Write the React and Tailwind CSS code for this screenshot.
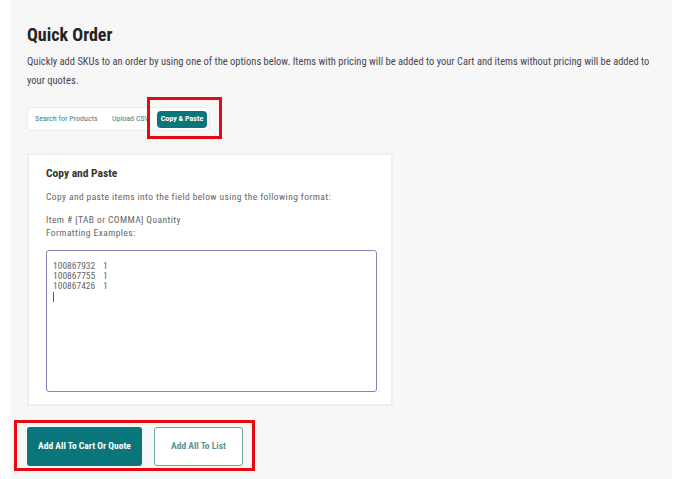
export default function App() {
  const font = "font-['Roboto_Condensed','Liberation_Sans_Narrow','Arial_Narrow','Liberation_Sans',sans-serif]";
  const rows = ["100867932", "100867755", "100867426"];
  return (
    <div className={`w-[688px] h-[479px] bg-white flex overflow-hidden ${font}`}>
      <div className="ml-[10px] w-[662px] h-full bg-[#f7f7f7] pl-[17px] pr-[14px] flex flex-col">
        <h1 className="mt-[23px] text-[18px] leading-[24px] font-bold text-[#222]">Quick Order</h1>
        <p className="mt-[5px] text-[10.5px] leading-[19px] text-[#4a4550]">
          Quickly add SKUs to an order by using one of the options below. Items with pricing will be added to your Cart and items without pricing will be added to your quotes.
        </p>

        <div className="relative mt-[17px] self-start">
          <div className="w-[183px] h-[24px] bg-white border border-[#ececec] rounded-[4px] flex items-center pl-[7px] text-[8px] text-[#3f7f87] whitespace-nowrap">
            <span className="w-[77px]">Search for Products</span>
            <span className="w-[44px] overflow-hidden">Upload CSV</span>
            <span className="ml-[1px] w-[50px] h-[17px] rounded-[4px] bg-[#0a767c] text-white font-bold flex items-center justify-center">Copy &amp; Paste</span>
          </div>
          <div className="absolute left-[120px] top-[-10px] w-[75px] h-[42px] border-[3px] border-[#e8080f]" />
        </div>

        <div className="mt-[22px] w-[366px] h-[253px] bg-white border-2 border-[#efefef] pl-[17px] pt-[10px]">
          <div className="text-[11.5px] font-bold text-[#333] leading-[16px]">Copy and Paste</div>
          <div className="mt-[9px] text-[9.5px] tracking-[0.4px] text-[#666] leading-[13px]">
            <div>Copy and paste items into the field below using the following format:</div>
            <div className="mt-[10px]">Item # [TAB or COMMA] Quantity</div>
            <div>Formatting Examples:</div>
          </div>
          <div className="mt-[11px] w-[331px] h-[142px] border-[1.5px] border-[#8585b5] rounded-[3px] pl-[6px] pt-[10px] text-[9.5px] leading-[10px] text-[#666]">
            {rows.map((r) => (
              <div key={r} className="flex">
                <span className="w-[50px]">{r}</span>
                <span>1</span>
              </div>
            ))}
            <div className="mt-[1px] w-[1px] h-[10px] bg-[#555]" />
          </div>
        </div>

        <div className="relative mt-[21px] self-start flex gap-[12px]">
          <button className="w-[115px] h-[39px] rounded-[3px] bg-[#0a767c] text-white text-[9.5px] font-bold">Add All To Cart Or Quote</button>
          <button className="w-[89px] h-[39px] rounded-[3px] bg-white border-[1.5px] border-[#6fa4a9] text-[#5d9398] text-[9.5px] font-bold">Add All To List</button>
          <div className="absolute left-[-13px] top-[-7px] w-[241px] h-[51px] border-[3px] border-[#e8080f]" />
        </div>
      </div>
    </div>
  );
}
